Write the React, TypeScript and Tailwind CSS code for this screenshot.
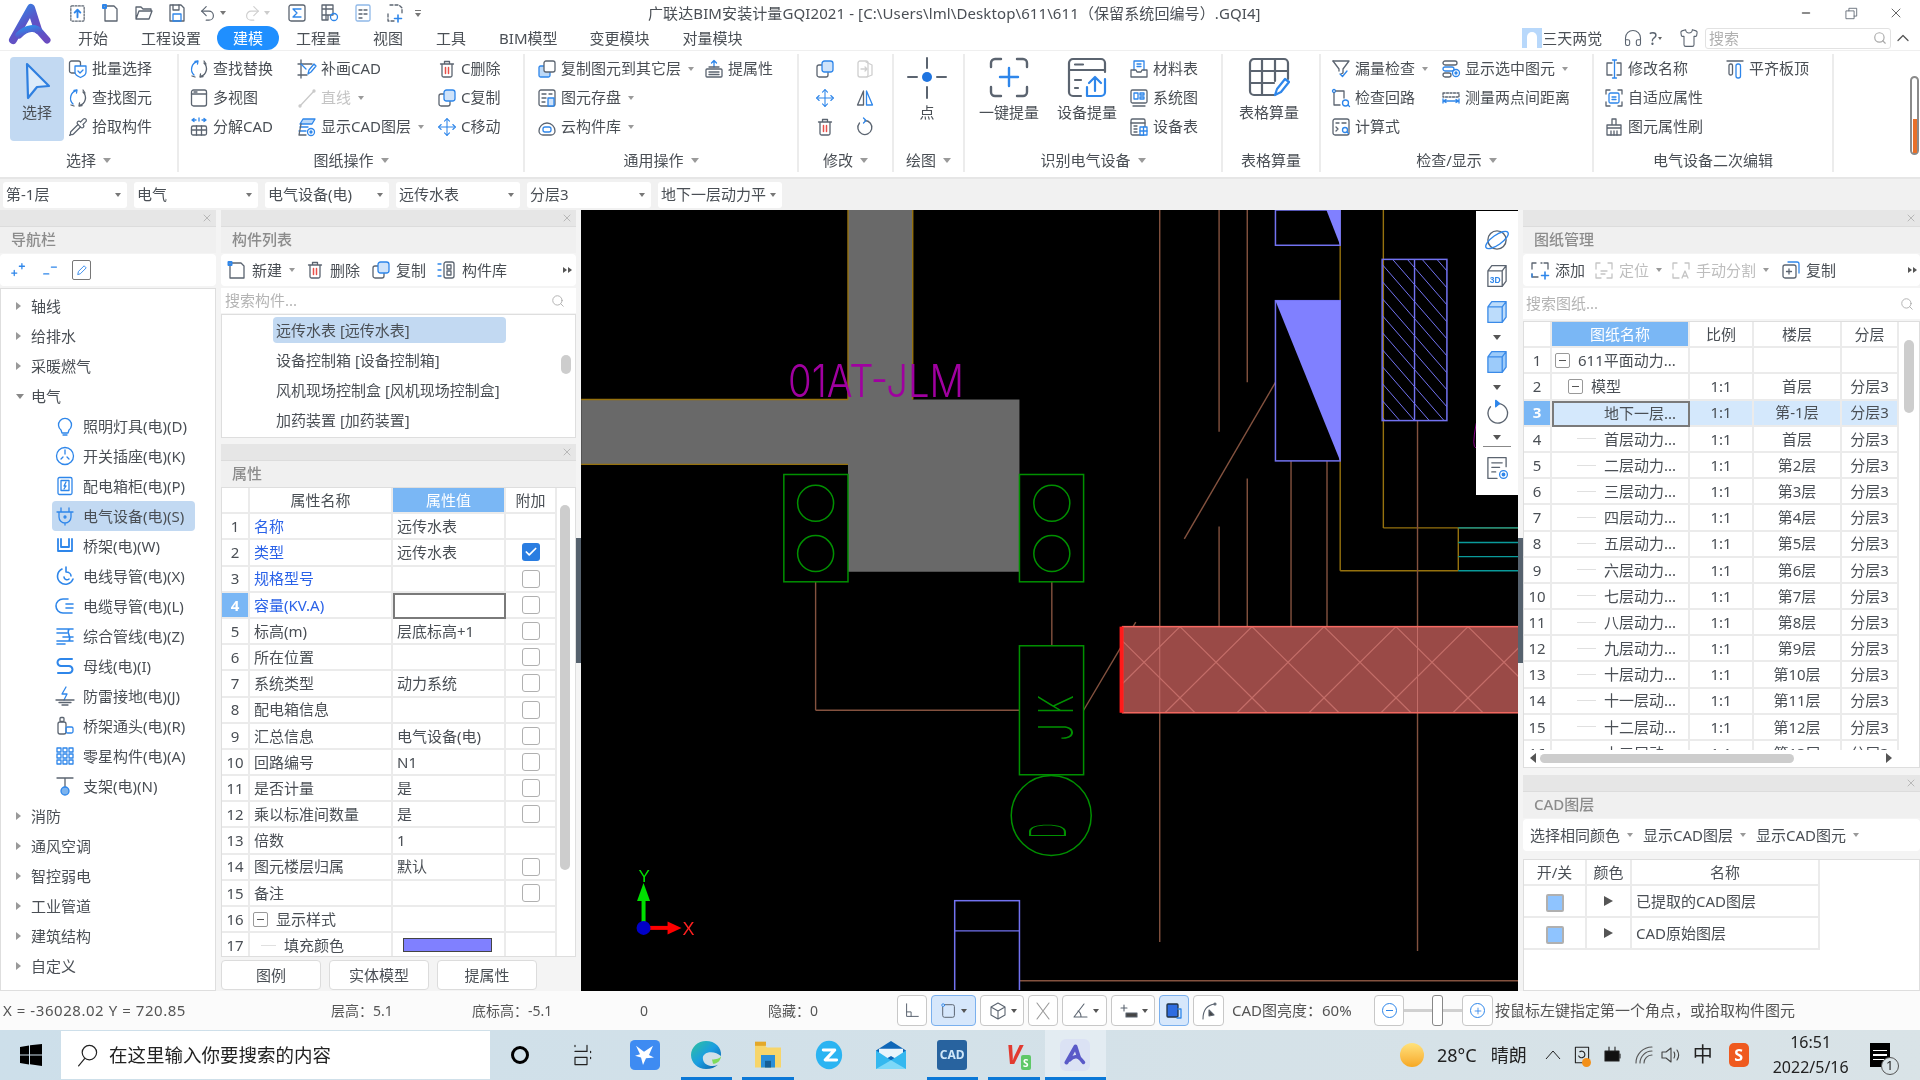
import React from "react";
import { Pipette, Move, ChevronUp, Search, Minus, X as XIcon, Check, Plus, Headphones, Shirt } from "lucide-react";

const G = "#5b6470";
const B = "#2e86ea";
const R = "#e8504a";

function Svg({ s = 20, sw = 1.3, c = G, children }: { s?: number; sw?: number; c?: string; children?: React.ReactNode }) {
  return (
    <svg width={s} height={s} viewBox="0 0 20 20" fill="none" stroke={c} strokeWidth={sw} strokeLinecap="round" strokeLinejoin="round" className="shrink-0">
      {children}
    </svg>
  );
}

const ic = {
  batch: <Svg><rect x="1.5" y="2" width="11" height="12" rx="2" /><path stroke={B} fill="#fff" d="M7 7h11v6c0 3-3 4.500-5.500 5.500C10 17.500 7 16 7 13z" /><path stroke={B} d="M10 12l2 2 3-3" /></Svg>,
  cycle: <Svg><path stroke={B} d="M8.500 2.500A8 8 0 0 0 5 16" /><path stroke={B} d="M6 2.500l3-.5-.5 3" /><path d="M11.500 17.500A8 8 0 0 0 15 4" /><path d="M14 17.500l-3 .5.500-3M3 17l3 1M15 2l2 3" /></Svg>,
  pipette: <Pipette size={20} color={G} strokeWidth={1.5} className="shrink-0" />,
  win: <Svg><rect x="2.500" y="2" width="15" height="16" rx="2" /><path d="M2.500 6h15" /><path d="M5 4h3" /></Svg>,
  explode: <Svg><path stroke={B} d="M3 3h4M5 1.500L3 3l2 1.500M17 3h-4M15 1.500L17 3l-2 1.500M10 1v3" /><rect x="2.500" y="9" width="15" height="9" rx="1.500" /><path d="M2.500 13h15M7.500 9v9M12.500 9v9" /></Svg>,
  draw: <Svg><path d="M4 1v18M1 5h14M1 16h9" /><path stroke={B} d="M11 15l1-4 5-6 2 2-5 6z" /><path stroke={B} d="M4 5l5 5" /></Svg>,
  line: <Svg c="#c9c9c9"><path d="M3 18L17 3" /><circle cx="3" cy="18" r="1" /><circle cx="17" cy="3" r="1" /></Svg>,
  layers: <Svg><path stroke={B} fill="#bcd9f8" d="M6 2h12l-3 5H3z" /><path stroke={B} d="M3 10h8M2 14h7" /><path d="M4 7L2 18h7" /><circle cx="14" cy="15" r="3.500" stroke={B} /><circle cx="14" cy="15" r="1" fill={B} stroke={B} /></Svg>,
  trash: <Svg><path d="M3.500 5h13M7.500 5V2.500h5V5M5 5v11.500a1.500 1.500 0 0 0 1.500 1.500h7a1.500 1.500 0 0 0 1.500-1.500V5" /><path stroke={R} strokeWidth="1.500" d="M8.500 8.500v6M11.500 8.500v6" /></Svg>,
  copy: <Svg><rect x="2" y="6" width="11" height="12" rx="2" /><rect x="7" y="2" width="11" height="11" rx="2.500" stroke={B} fill="#cfe3fa" /></Svg>,
  move: <Move size={20} color={B} strokeWidth={1.3} className="shrink-0" />,
  copyTo: <Svg><rect x="2" y="7" width="11" height="11" rx="1.500" stroke={B} fill="#bcd9f8" /><rect x="7" y="2" width="11" height="11" rx="2" fill="#fff" /></Svg>,
  save: <Svg><rect x="2" y="2" width="16" height="16" rx="2" /><path d="M5 6h4M12 6h3M5 10h4M5 14h3" /><rect x="11" y="10" width="6" height="8" stroke={B} fill="#cfe3fa" /></Svg>,
  cloud: <Svg><path d="M2 14a8 8 0 0 1 16 0 4 4 0 0 1-4 4H6a4 4 0 0 1-4-4z" /><rect x="6" y="10" width="8" height="5" rx="2" stroke={B} /></Svg>,
  lift: <Svg><path stroke={B} d="M10 8V1.500M7.500 4L10 1.500 12.500 4" /><path d="M5 8h10" /><rect x="2" y="10" width="16" height="8" rx="1" /><path d="M5 13h10M5 15.500h10" /></Svg>,
  clipX: <Svg c="#cfcfcf"><rect x="3" y="2" width="10" height="16" rx="2" /><path d="M11 3l6 3v10l-5 2" /><path d="M6 10h6M10 8l2 2-2 2" /></Svg>,
  mirror: <Svg><path d="M8.500 3L2.500 17h6z" /><path stroke={B} d="M11.500 3l6 14h-6z" /></Svg>,
  rotate: <Svg><path d="M10 3.500A7 7 0 1 1 4.500 6" /><path stroke={B} d="M8.500 1l2.500 2.500L8.500 6" /></Svg>,
  material: <Svg><path stroke={B} d="M5 11V2h10v9" /><path stroke={B} d="M8 5h4M8 7.500h4" /><path d="M2 11h5l1 2h4l1-2h5v7H2z" /></Svg>,
  sysmap: <Svg><rect x="2" y="2" width="16" height="13" rx="1.500" /><path stroke={B} d="M5 5h4v6H5zM11 5h4v2h-4zM11 9h4v2h-4z" /><path d="M4 18h12" /></Svg>,
  devlist: <Svg><rect x="2" y="2" width="14" height="16" rx="1.500" /><path d="M2 6h14M5 9h3M5 12h3M5 15h3" /><rect x="11" y="10" width="7" height="8" stroke={B} fill="#fff" /><path stroke={B} d="M11 14h7M14.500 10v8" /></Svg>,
  filter: <Svg><path d="M2 2h16l-6 8v4l-2 1" /><path d="M2 2l6 8v2" /><path stroke={B} d="M9 15l2.500 2.500L16 12" /></Svg>,
  listEye: <Svg><rect x="2" y="2" width="14" height="4" rx="2" /><rect x="2" y="8" width="11" height="4" rx="2" stroke={B} /><rect x="2" y="14" width="8" height="4" rx="2" /><circle cx="15" cy="14" r="3.500" stroke={B} /><circle cx="15" cy="14" r="1" fill={B} stroke={B} /></Svg>,
  loop: <Svg><circle cx="3" cy="3" r="1.500" stroke={B} /><path d="M5 3h8v7M3 5v12h6" /><circle cx="14.500" cy="15" r="3" stroke={B} /><path stroke={B} d="M17 17l1.500 1.500" /></Svg>,
  ruler: <Svg><path d="M2 5h16v4H2z" strokeDasharray="2 1.500" /><path stroke={B} d="M2 13h16M2 11v4M18 11v4M5 11.500L2.500 13 5 14.500M15 11.500l2.500 1.500-2.500 1.500" /></Svg>,
  formula: <Svg><rect x="2" y="2" width="16" height="16" rx="2" /><path d="M5 6h3M11 6h4M5 10l2 2-2 2" /><circle cx="14" cy="13" r="2.500" stroke={B} /><path stroke={B} d="M16 15l1.500 1.500" /></Svg>,
  rename: <Svg><path d="M8 4H3v12h5M13 4h4v12h-4" /><path stroke={B} d="M10.500 1v18M8.500 1h4M8.500 19h4" /></Svg>,
  align: <Svg><path d="M2 2h16" /><rect x="4" y="5" width="3.500" height="11" rx="1.500" /><rect x="11" y="5" width="4.500" height="14" rx="2" stroke={B} /></Svg>,
  fit: <Svg><path d="M2 6V2h4M14 2h4v4M2 14v4h4M14 18h4v-4" /><rect x="5" y="5" width="10" height="10" rx="1.500" stroke={B} /><path stroke={B} d="M8 9h4M8 11.500h4" /></Svg>,
  brush: <Svg><path d="M8 2h4v6H8zM3 8h14v3H3zM3 11v7h14v-7" /><path d="M7 14v4M10 14v4M13 14v4" /></Svg>,
};

function RItem({ icon, text, caret, dim }: { icon: React.ReactNode; text: string; caret?: boolean; dim?: boolean }) {
  return (
    <div className="flex h-[29px] items-center whitespace-nowrap">
      <span className="flex w-[24px] shrink-0">{icon}</span>
      <span className={dim ? "text-[#c4c4c4]" : "text-[#4a4f55]"}>{text}</span>
      {caret && <span className="ml-[7px] h-0 w-0 border-x-[3px] border-t-[4px] border-x-transparent border-t-[#9a9a9a]" />}
    </div>
  );
}

function Col({ className, children }: { className: string; children: React.ReactNode }) {
  return <div className={"flex shrink-0 flex-col " + className}>{children}</div>;
}

function Group({ className, label, caret = true, children }: { className: string; label: string; caret?: boolean; children: React.ReactNode }) {
  return (
    <div className={"flex h-[118px] shrink-0 flex-col border-r-2 border-[#ececec] " + className}>
      <div className="flex h-[95px]">{children}</div>
      <div className="flex h-[22px] items-center justify-center text-[#4a4f55]">
        {label}
        {caret && <span className="ml-[7px] h-0 w-0 border-x-[4px] border-t-[5px] border-x-transparent border-t-[#9a9a9a]" />}
      </div>
    </div>
  );
}

function Big({ icon, text, className }: { icon: React.ReactNode; text: string; className: string }) {
  return (
    <div className={"flex flex-col items-center " + className}>
      <div className="flex h-[47px] w-full items-start justify-center pt-[3px]">{icon}</div>
      <div className="text-[#4a4f55]">{text}</div>
    </div>
  );
}

function Logo() {
  return (
    <svg width="44" height="46" viewBox="0 0 44 46">
      <defs>
        <linearGradient id="lg" x1="0" y1="0" x2="0.6" y2="1">
          <stop offset="0" stopColor="#2f8ae8" />
          <stop offset="0.6" stopColor="#5a55c8" />
          <stop offset="1" stopColor="#6a4cc0" />
        </linearGradient>
      </defs>
      <path d="M5 38L23 6l7 22" fill="none" stroke="url(#lg)" strokeWidth="8" strokeLinecap="round" strokeLinejoin="round" />
      <path d="M11 33c8-8 17-8 21-3l7 8" fill="none" stroke="url(#lg)" strokeWidth="7" strokeLinecap="round" />
    </svg>
  );
}

function Header() {
  const quick = [
    <Svg s={19}><rect x="3" y="2" width="14" height="16" rx="1" strokeDasharray="2 1.500" /><path stroke={B} strokeWidth="2" d="M10 14V7M7 9l3-3 3 3" /></Svg>,
    <Svg s={20}><path d="M4 3v15h12V6l-3-3H6" /><path stroke={B} strokeWidth="2" d="M2 2h3v3H2z" /></Svg>,
    <Svg s={20}><path d="M2 16V4h5l2 2h8v2M2 16l3-8h13l-3 8z" /></Svg>,
    <Svg s={20}><path d="M3 2h11l3 3v13H3z" /><path d="M6 2v5h6V2" /><rect x="6" y="11" width="8" height="7" stroke={B} /></Svg>,
  ];
  return (
    <div className="flex h-[50px] shrink-0 bg-white">
      <div className="flex w-[66px] shrink-0 items-start pl-[8px] pt-[2px]"><Logo /></div>
      <div className="flex min-w-0 flex-1 flex-col">
        <div className="flex h-[26px] items-center text-[#4a4f55]">
          <div className="flex w-[582px] shrink-0 items-center">
            <span className="ml-[2px] w-[33px]">{quick[0]}</span>
            <span className="w-[33px]">{quick[1]}</span>
            <span className="w-[33px]">{quick[2]}</span>
            <span className="w-[32px]">{quick[3]}</span>
            <span className="flex w-[44px] items-center"><Svg s={18}><path d="M8 3L3 8l5 5" /><path d="M3 8h8a5 5 0 0 1 0 10H8" /></Svg><span className="ml-[3px] h-0 w-0 border-x-[3px] border-t-[4px] border-x-transparent border-t-[#777]" /></span>
            <span className="flex w-[44px] items-center"><Svg s={18} c="#cfcfcf"><path d="M12 3l5 5-5 5" /><path d="M17 8H9a5 5 0 0 0 0 10h3" /></Svg><span className="ml-[3px] h-0 w-0 border-x-[3px] border-t-[4px] border-x-transparent border-t-[#ccc]" /></span>
            <span className="w-[33px]"><Svg><rect x="2" y="2" width="16" height="16" rx="2" /><path stroke={B} d="M14 6H6l4 4-4 4h8" /></Svg></span>
            <span className="w-[33px]"><Svg><path d="M2 2h11v4H2zM2 6h11v6H2zM2 12h6v5H2zM6 2v15" /><circle cx="14" cy="14" r="3.500" stroke={B} /></Svg></span>
            <span className="w-[32px]"><Svg><rect x="3" y="2" width="14" height="16" rx="1.500" stroke="#8fb8e8" /><path d="M6 7h3M11 7h3M6 11h3M11 11h3M6 15h3" /></Svg></span>
            <span className="w-[30px]"><Svg><path d="M5 2h9l3 3v5M3 11v7h7" strokeDasharray="3 2" /><path stroke={B} strokeWidth="1.600" d="M13 12v7M9.500 15.500h7" /></Svg></span>
            <span className="flex flex-col items-center gap-[2px]"><span className="h-[1px] w-[6px] bg-[#777]" /><span className="h-0 w-0 border-x-[3px] border-t-[4px] border-x-transparent border-t-[#777]" /></span>
          </div>
          <span className="text-[15px] tracking-[0.1px]">广联达BIM安装计量GQI2021 - [C:\Users\lml\Desktop\611\611（保留系统回编号）.GQI4]</span>
          <div className="ml-auto flex items-center">
            <Minus size={12} color="#666" strokeWidth={3} />
            <span className="ml-[33px] flex"><Svg s={13}><path d="M6 6V2h12v12h-4M2 6h12v12H2z" /></Svg></span>
            <XIcon size={16} color="#666" strokeWidth={1.5} className="ml-[30px] mr-[16px]" />
          </div>
        </div>
        <div className="flex h-[24px] items-center text-[15px] text-[#4a4f55]">
          <span className="ml-[12px]">开始</span>
          <span className="ml-[33px]">工程设置</span>
          <span className="ml-[16px] flex h-[24px] w-[62px] items-center justify-center rounded-full bg-[#1f8fff] text-white">建模</span>
          <span className="ml-[17px]">工程量</span>
          <span className="ml-[32px]">视图</span>
          <span className="ml-[33px]">工具</span>
          <span className="ml-[33px]">BIM模型</span>
          <span className="ml-[32px]">变更模块</span>
          <span className="ml-[33px]">对量模块</span>
          <div className="ml-auto flex items-center">
            <span className="flex h-[20px] w-[20px] items-end justify-center bg-[#b8d8fb]"><span className="h-[16px] w-[10px] rounded-t-full bg-white" /></span>
            <span>三天两觉</span>
            <Headphones size={20} color={G} strokeWidth={1.3} className="ml-[21px]" />
            <span className="ml-[6px] text-[18px] leading-none text-[#5b6470]">?</span>
            <span className="ml-[1px] h-0 w-0 border-x-[2px] border-t-[3px] border-x-transparent border-t-[#666]" />
            <Shirt size={20} color={G} strokeWidth={1.3} className="ml-[17px]" />
            <div className="ml-[6px] flex h-[21px] w-[186px] items-center justify-between rounded-[3px] border border-[#e2e2e2] px-[3px] text-[#b0b0b0]">
              <span>搜索</span>
              <Search size={14} color="#aaa" />
            </div>
            <ChevronUp size={20} color="#555" strokeWidth={1.5} className="ml-[2px] mr-[7px]" />
          </div>
        </div>
      </div>
    </div>
  );
}

function Ribbon() {
  return (
    <div className="flex h-[127px] shrink-0 border-t border-[#efefef] bg-white pt-[3px] text-[15px]">
      <Group className="w-[179px]" label="选择">
        <div className="ml-[10px] mt-[3px] flex h-[84px] w-[54px] flex-col items-center rounded-[4px] bg-[#c2d9f2]">
          <svg width="34" height="40" viewBox="0 0 34 40" className="mt-[3px]"><path d="M7 4l22 22-12 1-9 11z" fill="#dcebfa" stroke="#2e7fe0" strokeWidth="2.200" strokeLinejoin="round" /></svg>
          <span className="mt-[1px] text-[#4a4f55]">选择</span>
        </div>
        <Col className="ml-[4px]">
          <RItem icon={ic.batch} text="批量选择" />
          <RItem icon={ic.cycle} text="查找图元" />
          <RItem icon={ic.pipette} text="拾取构件" />
        </Col>
      </Group>
      <Group className="w-[346px]" label="图纸操作">
        <Col className="ml-[10px] w-[108px]">
          <RItem icon={ic.cycle} text="查找替换" />
          <RItem icon={ic.win} text="多视图" />
          <RItem icon={ic.explode} text="分解CAD" />
        </Col>
        <Col className="w-[140px]">
          <RItem icon={ic.draw} text="补画CAD" />
          <RItem icon={ic.line} text="直线" dim caret />
          <RItem icon={ic.layers} text="显示CAD图层" caret />
        </Col>
        <Col>
          <RItem icon={ic.trash} text="C删除" />
          <RItem icon={ic.copy} text="C复制" />
          <RItem icon={ic.move} text="C移动" />
        </Col>
      </Group>
      <Group className="w-[274px]" label="通用操作">
        <Col className="ml-[12px] w-[167px]">
          <RItem icon={ic.copyTo} text="复制图元到其它层" caret />
          <RItem icon={ic.save} text="图元存盘" caret />
          <RItem icon={ic.cloud} text="云构件库" caret />
        </Col>
        <Col><RItem icon={ic.lift} text="提属性" /></Col>
      </Group>
      <Group className="w-[95px]" label="修改">
        <Col className="ml-[16px] w-[40px]">
          <RItem icon={ic.copy} text="" />
          <RItem icon={ic.move} text="" />
          <RItem icon={ic.trash} text="" />
        </Col>
        <Col>
          <RItem icon={ic.clipX} text="" />
          <RItem icon={ic.mirror} text="" />
          <RItem icon={ic.rotate} text="" />
        </Col>
      </Group>
      <Group className="w-[71px]" label="绘图">
        <Big className="w-[66px]" text="点" icon={
          <svg width="40" height="42" viewBox="0 0 40 42" fill="none" stroke={G} strokeWidth="2" strokeLinecap="round"><path d="M20 1v10M20 30v11M1 20h9M30 20h9" /><circle cx="20" cy="20" r="5" fill="#1f74e0" stroke="none" /></svg>
        } />
      </Group>
      <Group className="w-[258px]" label="识别电气设备">
        <Big className="ml-[8px] w-[72px]" text="一键提量" icon={
          <svg width="40" height="42" viewBox="0 0 40 42" fill="none" stroke={G} strokeWidth="2.400" strokeLinecap="round" strokeLinejoin="round"><path d="M2 10V6a4 4 0 0 1 4-4h6M28 2h6a4 4 0 0 1 4 4v4M2 30v5a4 4 0 0 0 4 4h6M28 39h6a4 4 0 0 0 4-4v-5" /><path stroke="#2e86ea" d="M20 11v18M11 20h18" /></svg>
        } />
        <Big className="ml-[2px] w-[80px]" text="设备提量" icon={
          <svg width="40" height="42" viewBox="0 0 40 42" fill="none" stroke={G} strokeWidth="2.200" strokeLinecap="round" strokeLinejoin="round"><path d="M14 39H6a4 4 0 0 1-4-4V6a4 4 0 0 1 4-4h28a4 4 0 0 1 4 4v9M2 13h36M8 7.500h8M8 23h6M8 31h3" /><path stroke="#2e86ea" d="M38 22v13a4 4 0 0 1-4 4H20v-9M28 34V20M22 26l6-6 6 6" /></svg>
        } />
        <Col className="ml-[2px]">
          <RItem icon={ic.material} text="材料表" />
          <RItem icon={ic.sysmap} text="系统图" />
          <RItem icon={ic.devlist} text="设备表" />
        </Col>
      </Group>
      <Group className="w-[98px]" label="表格算量" caret={false}>
        <Big className="ml-[6px] w-[80px]" text="表格算量" icon={
          <svg width="42" height="42" viewBox="0 0 42 42" fill="none" stroke={G} strokeWidth="2.200" strokeLinecap="round" strokeLinejoin="round"><path d="M26 38H6a4 4 0 0 1-4-4V6a4 4 0 0 1 4-4h30a4 4 0 0 1 4 4v16M2 14h38M2 26h24M14 2v36M27 2v22" /><path stroke="#2e86ea" d="M27 38l2-6 8-10 4 3-8 10z" /></svg>
        } />
      </Group>
      <Group className="w-[273px]" label="检查/显示">
        <Col className="ml-[10px] w-[110px]">
          <RItem icon={ic.filter} text="漏量检查" caret />
          <RItem icon={ic.loop} text="检查回路" />
          <RItem icon={ic.formula} text="计算式" />
        </Col>
        <Col>
          <RItem icon={ic.listEye} text="显示选中图元" caret />
          <RItem icon={ic.ruler} text="测量两点间距离" />
        </Col>
      </Group>
      <Group className="w-[240px]" label="电气设备二次编辑" caret={false}>
        <Col className="ml-[10px] w-[121px]">
          <RItem icon={ic.rename} text="修改名称" />
          <RItem icon={ic.fit} text="自适应属性" />
          <RItem icon={ic.brush} text="图元属性刷" />
        </Col>
        <Col><RItem icon={ic.align} text="平齐板顶" /></Col>
      </Group>
      <div className="ml-[76px] mt-[22px] flex h-[79px] w-[9px] flex-col justify-end rounded-full border-2 border-[#8a8a8a] bg-white">
        <div className="mx-auto h-[34px] w-[4px] bg-[#e8702a]" />
      </div>
    </div>
  );
}

function Sel({ text, w = "w-[124px]" }: { text: string; w?: string }) {
  return (
    <div className={"flex h-[26px] items-center justify-between rounded-[3px] bg-white pl-[3px] pr-[6px] text-[15px] text-[#4a4f55] " + w}>
      <span className="whitespace-nowrap">{text}</span>
      <span className="h-0 w-0 border-x-[3px] border-t-[4px] border-x-transparent border-t-[#777]" />
    </div>
  );
}

function SelBar() {
  return (
    <div className="flex h-[33px] shrink-0 items-center gap-[7px] border-t-2 border-[#e6e6e6] bg-[#f1f1f1] pl-[3px]">
      <Sel text="第-1层" />
      <Sel text="电气" />
      <Sel text="电气设备(电)" />
      <Sel text="远传水表" />
      <Sel text="分层3" />
      <Sel text="地下一层动力平" />
    </div>
  );
}

function PanelHead({ title }: { title: string }) {
  return (
    <>
      <div className="flex h-[16px] shrink-0 items-center justify-end bg-[#e6e6e6] pr-[3px]">
        <XIcon size={12} color="#a8a8a8" strokeWidth={1.500} />
      </div>
      <div className="flex h-[27px] shrink-0 items-center border-t border-[#dcdcdc] bg-[#f0f0f0] pb-[2px] pl-[11px] text-[15px] font-medium text-[#8c8c8c]">{title}</div>
    </>
  );
}

const T = "#2e86ea";
const treeIcons: React.ReactNode[] = [
  <Svg c={T} s={20}><path d="M6 14a6.500 6.500 0 1 1 8 0l-1 3H7z" /><path d="M8 19h4" /></Svg>,
  <Svg c={T} s={20}><circle cx="10" cy="10" r="8.500" /><path d="M10 4v4M6 13l2-2M14 13l-2-2" /></Svg>,
  <Svg c={T} s={20}><rect x="3" y="1.500" width="14" height="17" rx="1.500" /><rect x="6" y="4.500" width="8" height="10" /><path d="M11 6l-2 4h2l-2 3" /></Svg>,
  <Svg c={T} s={20}><path d="M2 6h16M6 2v4M14 2v4M4 6v5a6 6 0 0 0 12 0V6M10 17v2" /><circle cx="10" cy="11" r="1" /></Svg>,
  <Svg c={T} s={20} sw={1.800}><path d="M3 3v12h14V3M6 3v8h8V3" /></Svg>,
  <Svg c={T} s={20} sw={1.600}><path d="M7 3a8 8 0 1 0 11 10" /><path d="M11 1v5c3 0 5 2 5 4M9 11a3 3 0 0 0 5 2" /></Svg>,
  <Svg c={T} s={20} sw={1.600}><path d="M13 3H8a7 7 0 1 0 0 14h9M11 8h7M11 12h7" /></Svg>,
  <Svg c={T} s={20} sw={1.600}><path d="M2 3h16M2 7h10M8 11h10M2 15h16M2 18h8M14 3c-3 4 3 8 0 12" /></Svg>,
  <Svg c={T} s={20} sw={2}><path d="M17 3H6a3 3 0 0 0 0 7h8a3 3 0 0 1 0 7H3" /></Svg>,
  <Svg c={T} s={20}><path d="M11 1l-4 7h5l-3 6" /><path d="M1 14h18M4 16.500h12M7 19h6" stroke={G} /></Svg>,
  <Svg c={T} s={20}><rect x="3" y="6" width="8" height="12" rx="2" stroke={G} /><rect x="5" y="1.500" width="4" height="4" rx="1" stroke={G} /><rect x="11" y="11" width="7" height="6" rx="1.500" /></Svg>,
  <Svg c={T} s={20}><path d="M2 2h4v4H2zM8 2h4v4H8zM14 2h4v4h-4zM2 8h4v4H2zM8 8h4v4H8zM14 8h4v4h-4zM2 14h4v4H2zM8 14h4v4H8zM14 14h4v4h-4z" /></Svg>,
  <Svg c={G} s={20}><path d="M2 2h16M10 2v9" /><circle cx="10" cy="15" r="4" fill="#7cb3ee" stroke={T} /></Svg>,
];
const treeKids = ["照明灯具(电)(D)", "开关插座(电)(K)", "配电箱柜(电)(P)", "电气设备(电)(S)", "桥架(电)(W)", "电线导管(电)(X)", "电缆导管(电)(L)", "综合管线(电)(Z)", "母线(电)(I)", "防雷接地(电)(J)", "桥架通头(电)(R)", "零星构件(电)(A)", "支架(电)(N)"];

function Top({ text, open }: { text: string; open?: boolean }) {
  return (
    <div className="flex h-[30px] items-center">
      <span className="ml-[15px] flex w-[15px]">
        {open
          ? <span className="h-0 w-0 border-x-[4px] border-t-[5px] border-x-transparent border-t-[#888]" />
          : <span className="h-0 w-0 border-y-[4px] border-l-[5px] border-y-transparent border-l-[#999]" />}
      </span>
      <span>{text}</span>
    </div>
  );
}

function Nav() {
  return (
    <div className="flex w-[216px] shrink-0 flex-col">
      <PanelHead title="导航栏" />
      <div className="mt-[1px] flex h-[32px] shrink-0 items-center rounded-[4px] bg-white pl-[10px]">
        <Svg s={17} c={B} sw={1.500}><path d="M2 13h6M5 10v6M11 5h6M14 2v6" /></Svg>
        <span className="ml-[15px]"><Svg s={17} c={B} sw={1.500}><path d="M2 14h6M11 6h6" /></Svg></span>
        <span className="ml-[13px] flex h-[20px] w-[19px] items-center justify-center rounded-[2px] border border-[#777]"><Svg s={14} c={B}><path d="M4 16l1-4 8-8 3 3-8 8z" /></Svg></span>
      </div>
      <div className="mt-[2px] flex-1 border border-[#dedede] bg-white pt-[2px] text-[15px] text-[#4a4f55]">
        <Top text="轴线" />
        <Top text="给排水" />
        <Top text="采暖燃气" />
        <Top text="电气" open />
        {treeKids.map((t, i) => (
          <div key={t} className={"ml-[51px] flex h-[30px] w-[143px] items-center pl-[3px] " + (i === 3 ? "rounded-[4px] bg-[#c2d9f2]" : "")}>
            <span className="flex w-[28px]">{treeIcons[i]}</span>
            <span className="whitespace-nowrap">{t}</span>
          </div>
        ))}
        <Top text="消防" />
        <Top text="通风空调" />
        <Top text="智控弱电" />
        <Top text="工业管道" />
        <Top text="建筑结构" />
        <Top text="自定义" />
      </div>
    </div>
  );
}

function TB({ icon, text, caret, dim }: { icon?: React.ReactNode; text: string; caret?: boolean; dim?: boolean }) {
  return (
    <div className="flex items-center whitespace-nowrap">
      {icon && <span className="mr-[5px] flex">{icon}</span>}
      <span className={dim ? "text-[#bdbdbd]" : "text-[#4a4f55]"}>{text}</span>
      {caret && <span className="ml-[7px] h-0 w-0 border-x-[3px] border-t-[4px] border-x-transparent border-t-[#999]" />}
    </div>
  );
}

function More() {
  return (
    <span className="flex h-[26px] w-[12px] items-center justify-center rounded-[3px] bg-white">
      <span className="h-0 w-0 border-y-[3px] border-l-[4px] border-y-transparent border-l-[#555]" />
      <span className="ml-[1px] h-0 w-0 border-y-[3px] border-l-[4px] border-y-transparent border-l-[#555]" />
    </span>
  );
}

function ComponentList() {
  return (
    <div className="flex h-[228px] shrink-0 flex-col">
      <PanelHead title="构件列表" />
      <div className="mt-[1px] flex h-[32px] shrink-0 items-center gap-[10px] rounded-[4px] bg-white pl-[6px] text-[15px]">
        <TB icon={<Svg s={20}><path d="M3 3v15h14V6l-3-3H5" /><path stroke={B} strokeWidth="2" d="M1.500 2h3v3h-3z" /></Svg>} text="新建" caret />
        <TB icon={ic.trash} text="删除" />
        <span className="ml-[1px]"><TB icon={ic.copy} text="复制" /></span>
        <span className="ml-[1px]"><TB icon={<Svg s={20}><path stroke={B} d="M1 4h3M1 10h3M1 16h3" /><rect x="7" y="2" width="10" height="16" rx="2" /><rect x="10" y="5" width="4" height="4" /><rect x="10" y="11" width="4" height="4" /></Svg>} text="构件库" /></span>
        <span className="ml-auto mr-[3px]"><More /></span>
      </div>
      <div className="mt-[2px] flex h-[25px] shrink-0 items-center justify-between bg-white pl-[4px] pr-[11px] text-[15px] text-[#b4b4b4]">
        <span>搜索构件...</span>
        <Search size={14} color="#aaa" strokeWidth={1.500} />
      </div>
      <div className="relative mt-[1px] flex-1 border border-[#dedede] bg-white text-[15px] text-[#4a4f55]">
        <div className="ml-[51px] mt-[2px] flex h-[26px] w-[233px] items-center rounded-[4px] bg-[#c2d9f2] pl-[3px]">远传水表 [远传水表]</div>
        <div className="ml-[54px] flex h-[30px] items-center whitespace-nowrap pt-[4px]">设备控制箱 [设备控制箱]</div>
        <div className="ml-[54px] mt-[2px] flex h-[30px] items-center whitespace-nowrap">风机现场控制盒 [风机现场控制盒]</div>
        <div className="ml-[54px] flex h-[30px] items-center whitespace-nowrap">加药装置 [加药装置]</div>
        <div className="absolute right-[4px] top-[40px] h-[19px] w-[10px] rounded-full bg-[#cdcdcd]" />
      </div>
    </div>
  );
}

function Cb({ checked }: { checked?: boolean }) {
  if (checked)
    return <span className="flex h-[18px] w-[18px] items-center justify-center rounded-[3px] bg-[#2a7de1]"><Check size={14} color="#fff" strokeWidth={3} /></span>;
  return <span className="h-[18px] w-[18px] rounded-[3px] border-[1.500px] border-[#b0b0b0] bg-white" />;
}

const props: [string, string, number][] = [
  ["名称", "远传水表", 0],
  ["类型", "远传水表", 2],
  ["规格型号", "", 1],
  ["容量(KV.A)", "", 1],
  ["标高(m)", "层底标高+1", 1],
  ["所在位置", "", 1],
  ["系统类型", "动力系统", 1],
  ["配电箱信息", "", 1],
  ["汇总信息", "电气设备(电)", 1],
  ["回路编号", "N1", 1],
  ["是否计量", "是", 1],
  ["乘以标准间数量", "是", 1],
  ["倍数", "1", 0],
  ["图元楼层归属", "默认", 1],
  ["备注", "", 1],
];

const cell = "flex h-[26.200px] items-center border-b-2 border-r-2 border-[#ebebeb]";
const selCell = "flex h-[26.200px] items-center border-2 border-[#7a7a7a]";

function Props() {
  return (
    <div className="mt-[6px] flex flex-1 flex-col">
      <PanelHead title="属性" />
      <div className="relative h-[470px] overflow-hidden border border-[#dedede] bg-white text-[15px] text-[#4a4f55]">
        <div className="grid w-[335px] grid-cols-[28px_143px_113px_51px]">
          <div className={cell} />
          <div className={cell + " justify-center"}>属性名称</div>
          <div className={cell + " justify-center bg-[#7ab7f5] text-white"}>属性值</div>
          <div className={cell + " justify-center"}>附加</div>
          {props.map(([n, v, c], i) => (
            <React.Fragment key={n}>
              <div className={cell + " justify-center " + (i === 3 ? "bg-[#7ab7f5] font-bold text-white" : "")}>{i + 1}</div>
              <div className={cell + " pl-[4px] whitespace-nowrap " + (i < 4 ? "text-[#2a62e8]" : "")}>{n}</div>
              <div className={(i === 3 ? selCell : cell) + " pl-[4px] whitespace-nowrap"}>{v}</div>
              <div className={cell + " justify-center"}>{c > 0 && <Cb checked={c === 2} />}</div>
            </React.Fragment>
          ))}
          <div className={cell + " justify-center"}>16</div>
          <div className={cell + " pl-[3px]"}>
            <span className="mr-[8px] flex h-[15px] w-[15px] items-center justify-center rounded-[2px] border border-[#999]"><span className="h-[1px] w-[7px] bg-[#555]" /></span>
            显示样式
          </div>
          <div className={cell} />
          <div className={cell} />
          <div className={cell + " justify-center"}>17</div>
          <div className={cell + " pl-[11px]"}>
            <span className="mr-[8px] h-[1px] w-[15px] bg-[#e0e0e0]" />
            填充颜色
          </div>
          <div className={cell + " pl-[10px]"}><span className="h-[14px] w-[89px] border border-[#444] bg-[#8080ff]" /></div>
          <div className={cell} />
        </div>
        <div className="absolute right-[5px] top-[17px] h-[365px] w-[10px] rounded-full bg-[#cdcdcd]" />
      </div>
      <div className="mt-[3px] flex gap-[8px] text-[15px] text-[#4a4f55]">
        {["图例", "实体模型", "提属性"].map((t) => (
          <div key={t} className="flex h-[30px] w-[100px] items-center justify-center rounded-[4px] border border-[#dcdcdc] bg-white">{t}</div>
        ))}
      </div>
    </div>
  );
}

const zx = (v: number) => v / 1.668 - 1;
const zy = (v: number) => v / 1.985 - 1;

const brown: number[][] = [
  [393, 740, 393, 995], [393, 995, 733, 995], [787, 740, 787, 867], [840, 995, 927, 820],
  [967, 2, 967, 1455], [1066, 2, 1066, 442], [1066, 630, 1066, 830], [1113, 2, 1113, 344], [1113, 535, 1113, 830],
  [1186, 500, 1186, 830], [1246, 500, 1246, 830], [1397, 420, 1397, 1473], [1160, 344, 1008, 655], [733, 1532, 1566, 1532],
];
const gold: number[][] = [
  [447, 2, 447, 378], [555, 2, 555, 378], [2, 378, 447, 378], [2, 507, 447, 507],
  [1268, 2, 1268, 718], [1268, 718, 1465, 718], [1465, 718, 1465, 633], [1340, 2, 1340, 633], [1340, 633, 1566, 633],
];
const teal: number[][] = [[1465, 633, 1566, 633], [1465, 662, 1566, 662], [1465, 690, 1566, 690], [1465, 718, 1566, 718]];
const violet = "#7272f0";
const green = "#009000";

function Ln({ d, c, w = 1.400 }: { d: number[]; c: string; w?: number }) {
  return <line x1={zx(d[0])} y1={zy(d[1])} x2={zx(d[2])} y2={zy(d[3])} stroke={c} strokeWidth={w} />;
}

function Rc({ a, b, cc, d, c }: { a: number; b: number; cc: number; d: number; c: string }) {
  return <rect x={zx(a)} y={zy(b)} width={(cc - a) / 1.668} height={(d - b) / 1.985} fill="none" stroke={c} strokeWidth={1.500} />;
}

function CanvasDrawing() {
  const px = (pts: number[][]) => pts.map(([a, b]) => `${zx(a)},${zy(b)}`).join(" ");
  const rx0 = zx(905), ry0 = zy(829), ry1 = zy(1000);
  const k = [-3, -2, -1, 0, 1, 2, 3, 4, 5, 6];
  const hx0 = zx(1338), hy0 = zy(100), hw = 108 / 1.668, hh = 320 / 1.985;
  const thin = "Inter,'Liberation Sans',sans-serif";
  return (
    <svg width="937" height="780" viewBox="0 0 937 780" className="absolute left-0 top-0">
      <defs>
        <clipPath id="redclip"><rect x={rx0} y={ry0} width={937 - rx0} height={ry1 - ry0} /></clipPath>
        <clipPath id="hatchclip"><rect x={hx0} y={hy0} width={hw} height={hh} /></clipPath>
      </defs>
      <polygon points={px([[447, 2], [555, 2], [555, 378], [733, 378], [733, 720], [447, 720], [447, 507], [2, 507], [2, 378], [447, 378]])} fill="#696969" />
      {gold.map((d, i) => <Ln key={i} d={d} c="#96720e" />)}
      {teal.map((d, i) => <Ln key={i} d={d} c="#0a9a9a" />)}
      {brown.map((d, i) => <Ln key={i} d={d} c="#84523f" />)}
      <text x={zx(347)} y={zy(373)} fontSize="45" fill="#a000a0" fontWeight="300" fontFamily={thin} textLength="176" lengthAdjust="spacingAndGlyphs">01AT-JLM</text>
      <Rc a={340} b={527} cc={447} d={740} c={green} />
      <Rc a={733} b={527} cc={840} d={740} c={green} />
      {[393, 787].map((x) => [584, 684].map((y) => <circle key={x + "-" + y} cx={zx(x)} cy={zy(y)} r="18" fill="none" stroke={green} strokeWidth="1.500" />))}
      <Rc a={733} b={867} cc={840} d={1123} c={green} />
      <text transform={`translate(${zx(822)},${zy(1056)}) rotate(-90)`} fontSize="48" fill={green} fontWeight="200" fontFamily={thin} textLength="46" lengthAdjust="spacingAndGlyphs">J K</text>
      <circle cx={zx(786)} cy={zy(1204)} r="40" fill="none" stroke={green} strokeWidth="1.500" />
      <text transform={`translate(${zx(810)},${zy(1249)}) rotate(-90)`} fontSize="50" fill={green} fontWeight="200" fontFamily={thin} textLength="15" lengthAdjust="spacingAndGlyphs">D</text>
      <rect x={rx0} y={ry0} width={937 - rx0} height={ry1 - ry0} fill="#9a4a47" />
      <g clipPath="url(#redclip)" stroke="#c46e69" strokeWidth="1.200">
        {k.map((i) => <line key={"a" + i} x1={599 + 72 * i} y1={ry0} x2={599 + 72 * i + 87} y2={ry1} />)}
        {k.map((i) => <line key={"b" + i} x1={599 + 72 * i} y1={ry0} x2={599 + 72 * i - 87} y2={ry1} />)}
      </g>
      <line x1={zx(967)} y1={ry0} x2={zx(967)} y2={ry1} stroke="#c46e69" />
      <line x1={zx(1397)} y1={ry0} x2={zx(1397)} y2={ry1} stroke="#c46e69" />
      <rect x={rx0} y={ry0} width={937 - rx0 + 4} height={ry1 - ry0} fill="none" stroke="#f56a62" strokeWidth="1.500" />
      <rect x={zx(900)} y={ry0} width="4" height={ry1 - ry0} fill="#ff1a1a" />
      <Rc a={1160} b={2} cc={1268} d={72} c={violet} />
      <polygon points={px([[1245, 2], [1268, 2], [1268, 72]])} fill="#8080ff" />
      <Rc a={1160} b={182} cc={1268} d={500} c={violet} />
      <polygon points={px([[1160, 182], [1268, 182], [1268, 500]])} fill="#8080ff" />
      <g clipPath="url(#hatchclip)" stroke={violet} strokeWidth="1">
        {Array.from({ length: 16 }, (_, i) => <line key={i} x1={hx0} y1={hy0 - 80 + i * 17} x2={hx0 + hw} y2={hy0 - 80 + i * 17 + hw * 1.15} />)}
      </g>
      <Rc a={1338} b={100} cc={1446} d={420} c={violet} />
      <Ln d={[1392, 100, 1392, 420]} c={violet} />
      <Rc a={625} b={1373} cc={733} d={1560} c={violet} />
      <Ln d={[625, 1433, 733, 1433]} c={violet} />
      <path d={`M${zx(1495)} ${zy(425)} q-5 25 0 25`} fill="none" stroke="#8a008a" />
      <g transform={`translate(${zx(106)},${zy(1427)})`}>
        <line x1="0" y1="0" x2="0" y2="-30" stroke="#00e000" strokeWidth="4" />
        <polygon points="-6.500,-27 6.500,-27 0,-45" fill="#00e000" />
        <line x1="0" y1="0" x2="26" y2="0" stroke="#ff0000" strokeWidth="4" />
        <polygon points="24,-6.500 24,6.500 38,0" fill="#ff0000" />
        <circle r="7" fill="#0000c8" />
        <text x="-5" y="-46" fontSize="17" fill="#00e000" fontFamily="'Liberation Sans',sans-serif">Y</text>
        <text x="39" y="7" fontSize="18" fill="#ff2020" fontFamily="'Liberation Sans',sans-serif">X</text>
      </g>
    </svg>
  );
}

function CanvasTools() {
  const cube = (fill: string) => (
    <Svg s={26} sw={1}><path fill={fill} stroke={fill === "#fff" ? G : "#3a8ae8"} d="M3 6h11v12H3zM3 6l3-4h11v12l-3 4M14 6l3-4" /></Svg>
  );
  const tri = <span className="mb-[9px] mt-[10px] h-0 w-0 shrink-0 border-x-[4px] border-t-[5px] border-x-transparent border-t-[#555]" />;
  return (
    <div className="absolute right-0 top-[1px] flex h-[284px] w-[42px] flex-col items-center bg-white pt-[15px]">
      <Svg s={28} sw={1}><circle cx="10" cy="10" r="6.500" /><ellipse cx="10" cy="10" rx="9.500" ry="3.500" transform="rotate(-35 10 10)" stroke={B} /></Svg>
      <span className="mt-[9px] flex"><Svg s={26} sw={1}><path d="M3 6h11v12H3zM3 6l3-4h11v12l-3 4M14 6l3-4" /><text x="4.500" y="15" fontSize="6.500" fill={B} stroke="none" fontWeight="700" fontFamily="'Liberation Sans',sans-serif">3D</text></Svg></span>
      <span className="mt-[10px] flex">{cube("#bcdcfb")}</span>
      {tri}
      <span className="flex">{cube("#9ccbfa")}</span>
      {tri}
      <span className="flex"><Svg s={26} sw={1}><path d="M11 3.500a7.500 7.500 0 1 1-6 2.500" /><path stroke={B} fill={B} d="M9 1l3 2.500L9 6z" /></Svg></span>
      {tri}
      <span className="-mt-[3px] h-[1px] w-[28px] shrink-0 bg-[#888]" />
      <span className="mt-[8px] flex"><Svg s={26} sw={1}><path d="M17 9V2H3v16h7M6 6h8M6 9.500h6M6 13h3" /><circle cx="15" cy="15" r="3" stroke={B} /><circle cx="15" cy="15" r="1" fill={B} stroke={B} /></Svg></span>
    </div>
  );
}

function Grip() {
  return (
    <div className="flex w-[5px] shrink-0 items-center justify-center">
      <div className="h-[125px] w-[5px] bg-[#56626e]" />
    </div>
  );
}

const sheetRows: [string, string, string, string][] = [
  ["首层动力...", "1:1", "首层", "分层3"],
  ["二层动力...", "1:1", "第2层", "分层3"],
  ["三层动力...", "1:1", "第3层", "分层3"],
  ["四层动力...", "1:1", "第4层", "分层3"],
  ["五层动力...", "1:1", "第5层", "分层3"],
  ["六层动力...", "1:1", "第6层", "分层3"],
  ["七层动力...", "1:1", "第7层", "分层3"],
  ["八层动力...", "1:1", "第8层", "分层3"],
  ["九层动力...", "1:1", "第9层", "分层3"],
  ["十层动力...", "1:1", "第10层", "分层3"],
  ["十一层动...", "1:1", "第11层", "分层3"],
  ["十二层动...", "1:1", "第12层", "分层3"],
  ["十三层动...", "1:1", "第13层", "分层3"],
];

function MinusBox({ className = "" }: { className?: string }) {
  return <span className={"flex h-[15px] w-[15px] shrink-0 items-center justify-center rounded-[2px] border border-[#999] " + className}><span className="h-[1px] w-[7px] bg-[#555]" /></span>;
}

function Sheets() {
  return (
    <div className="flex h-[558px] shrink-0 flex-col">
      <PanelHead title="图纸管理" />
      <div className="mt-[1px] flex h-[32px] shrink-0 items-center gap-[9px] rounded-[4px] bg-white pl-[7px] text-[15px]">
        <TB icon={<Svg s={20}><path d="M2 9V3h4M14 3h4v6M2 14v3h6" /><path d="M11 3h1" /><path stroke={B} strokeWidth="1.600" d="M15 12v7M11.500 15.500h7" /><path stroke={B} d="M2 17v-3" /></Svg>} text="添加" />
        <TB icon={<Svg s={20} c="#c5c5c5"><path d="M2 9V3h4M14 3h4v6M2 14v4h5M18 14v4h-5" /><path d="M7 11h6M7 14h4" /></Svg>} text="定位" dim caret />
        <TB icon={<Svg s={20} c="#c5c5c5"><path d="M2 9V3h4M14 3h4v6M2 14v4h6" /><path d="M11 18l3-7 3 7M12 16h4" /></Svg>} text="手动分割" dim caret />
        <span className="ml-[3px]"><TB icon={<Svg s={20}><rect x="2" y="5" width="13" height="13" rx="2" /><path stroke={B} d="M7 2h9a2 2 0 0 1 2 2v9" /><path d="M8 9v5M5.500 11.500h5" /></Svg>} text="复制" /></span>
        <span className="ml-auto mr-[2px]"><More /></span>
      </div>
      <div className="mt-[2px] flex h-[31px] shrink-0 items-center justify-between bg-white pl-[3px] pr-[6px] text-[15px] text-[#b4b4b4]">
        <span>搜索图纸...</span>
        <Search size={14} color="#aaa" strokeWidth={1.500} />
      </div>
      <div className="relative mt-[2px] flex-1 overflow-hidden border border-[#dedede] bg-white text-[15px] text-[#4a4f55]">
        <div className="h-[428px] overflow-hidden">
          <div className="grid w-[375px] grid-cols-[28px_138px_64px_88px_57px]">
            <div className={cell} />
            <div className={cell + " justify-center bg-[#7ab7f5] text-white"}>图纸名称</div>
            <div className={cell + " justify-center"}>比例</div>
            <div className={cell + " justify-center"}>楼层</div>
            <div className={cell + " justify-center"}>分层</div>

            <div className={cell + " justify-center"}>1</div>
            <div className={cell + " pl-[3px] whitespace-nowrap"}><MinusBox className="mr-[8px]" />611平面动力...</div>
            <div className={cell} />
            <div className={cell} />
            <div className={cell} />

            <div className={cell + " justify-center"}>2</div>
            <div className={cell + " pl-[16px] whitespace-nowrap"}><MinusBox className="mr-[8px]" />模型</div>
            <div className={cell + " justify-center"}>1:1</div>
            <div className={cell + " justify-center"}>首层</div>
            <div className={cell + " justify-center"}>分层3</div>

            <div className={cell + " justify-center bg-[#7ab7f5] font-bold text-white"}>3</div>
            <div className={selCell + " bg-[#d4e8fc] pl-[50px] whitespace-nowrap"}>地下一层...</div>
            <div className={cell + " justify-center bg-[#d4e8fc]"}>1:1</div>
            <div className={cell + " justify-center bg-[#d4e8fc]"}>第-1层</div>
            <div className={cell + " justify-center bg-[#d4e8fc]"}>分层3</div>

            {sheetRows.map(([a, b, c, d], i) => (
              <React.Fragment key={a}>
                <div className={cell + " justify-center"}>{i + 4}</div>
                <div className={cell + " pl-[25px] whitespace-nowrap"}><span className="mr-[8px] h-[1px] w-[19px] bg-[#e0e0e0]" />{a}</div>
                <div className={cell + " justify-center"}>{b}</div>
                <div className={cell + " justify-center"}>{c}</div>
                <div className={cell + " justify-center"}>{d}</div>
              </React.Fragment>
            ))}
          </div>
        </div>
        <div className="absolute right-[5px] top-[18px] h-[73px] w-[10px] rounded-full bg-[#cdcdcd]" />
        <div className="flex h-[16px] items-center pl-[6px]">
          <span className="h-0 w-0 border-y-[5px] border-r-[6px] border-y-transparent border-r-[#555]" />
          <div className="ml-[4px] h-[9px] w-[254px] rounded-full bg-[#cdcdcd]" />
          <span className="ml-[92px] h-0 w-0 border-y-[5px] border-l-[6px] border-y-transparent border-l-[#555]" />
        </div>
      </div>
    </div>
  );
}

function Layers() {
  const c2 = "flex items-center border-b-2 border-r-2 border-[#ebebeb]";
  const blueBox = <span className="flex h-[18px] w-[18px] items-center justify-center rounded-[2px] border-2 border-[#b0b0b0] bg-[#8fc4ff]" />;
  const tri = <span className="h-0 w-0 border-y-[5px] border-l-[9px] border-y-transparent border-l-[#555]" />;
  return (
    <div className="mt-[7px] flex flex-1 flex-col">
      <PanelHead title="CAD图层" />
      <div className="mt-[1px] flex h-[32px] shrink-0 items-center gap-[10px] rounded-[4px] bg-white pl-[7px] text-[15px]">
        <TB text="选择相同颜色" caret />
        <TB text="显示CAD图层" caret />
        <TB text="显示CAD图元" caret />
      </div>
      <div className="mt-[8px] flex-1 border border-[#dedede] bg-white text-[15px] text-[#4a4f55]">
        <div className="grid w-[296px] grid-cols-[63px_45px_188px]">
          <div className={c2 + " h-[26px] justify-center"}>开/关</div>
          <div className={c2 + " h-[26px] justify-center"}>颜色</div>
          <div className={c2 + " h-[26px] justify-center"}>名称</div>
          <div className={c2 + " h-[32px] justify-center pt-[4px]"}>{blueBox}</div>
          <div className={c2 + " h-[32px] justify-center"}>{tri}</div>
          <div className={c2 + " h-[32px] pl-[4px]"}>已提取的CAD图层</div>
          <div className={c2 + " h-[32px] justify-center pt-[4px]"}>{blueBox}</div>
          <div className={c2 + " h-[32px] justify-center"}>{tri}</div>
          <div className={c2 + " h-[32px] pl-[4px]"}>CAD原始图层</div>
        </div>
      </div>
    </div>
  );
}

function Btn({ w, active, caret, children }: { w: string; active?: boolean; caret?: boolean; children: React.ReactNode }) {
  return (
    <div className={"flex h-[31px] shrink-0 items-center justify-center gap-[3px] rounded-[4px] border " + w + (active ? " border-[#7ab0ee] bg-[#d6e7fb]" : " border-[#c8c8c8] bg-white")}>
      {children}
      {caret && <span className="h-0 w-0 border-x-[3px] border-t-[4px] border-x-transparent border-t-[#555]" />}
    </div>
  );
}

function Status() {
  return (
    <div className="flex h-[39px] shrink-0 items-center bg-[#fbfbfb] text-[14px] text-[#555]">
      <span className="ml-[3px] w-[328px] shrink-0 text-[15px] tracking-[0.55px]">X = -36028.02 Y = 720.85</span>
      <span className="w-[141px] shrink-0">层高：5.1</span>
      <span className="w-[168px] shrink-0">底标高：-5.1</span>
      <span className="w-[128px] shrink-0">0</span>
      <span className="w-[129px] shrink-0">隐藏：0</span>
      <div className="flex items-center gap-[4px]">
        <Btn w="w-[30px]"><Svg s={18} sw={1.100}><path d="M4 2v14h13M4 11h5v5" /></Svg></Btn>
        <Btn w="w-[45px]" active caret><Svg s={18} sw={1.100}><rect x="3" y="3" width="13" height="14" rx="2" /><circle cx="3.500" cy="3.500" r="1.500" stroke={B} fill="#fff" /></Svg></Btn>
        <Btn w="w-[44px]" caret><Svg s={20} sw={1.100}><path d="M10 2l7 4v8l-7 4-7-4V6zM3 6l7 4 7-4M10 10v8" /></Svg></Btn>
        <Btn w="w-[30px]"><Svg s={20} sw={1.100} c="#999"><path d="M4 2l12 16M16 2L4 18" /></Svg></Btn>
        <Btn w="w-[45px]" caret><Svg s={20} sw={1.100}><path d="M14 3L4 16h13M8 10c2 1 3 3 3 6" /></Svg></Btn>
        <Btn w="w-[44px]" caret><Svg s={20} sw={1.100}><path d="M2 7h6M5 4v6" /><rect x="7" y="12" width="11" height="4" fill="#444" /></Svg></Btn>
        <Btn w="w-[30px]" active><Svg s={20} sw={1.300}><rect x="3" y="3" width="11" height="13" rx="1" fill="#2e6ce0" stroke="#234" /><path stroke={B} d="M14 8h3v9h-4" /></Svg></Btn>
        <Btn w="w-[31px]"><Svg s={20} sw={1.100}><path d="M4 18c0-8 3-14 12-15" /><path d="M10 9l5 5-5 1z" fill="#444" /><circle cx="16" cy="3" r="1" /></Svg></Btn>
      </div>
      <span className="ml-[8px] w-[142px] shrink-0 whitespace-nowrap text-[15px]">CAD图亮度：60%</span>
      <Btn w="w-[30px]"><span className="flex h-[15px] w-[15px] items-center justify-center rounded-full border border-[#2e86ea]"><span className="h-[1px] w-[7px] bg-[#2e86ea]" /></span></Btn>
      <div className="relative flex h-[31px] w-[58px] shrink-0 items-center">
        <div className="h-[3px] w-full bg-[#d0d0d0]" />
        <div className="absolute left-[28px] top-0 h-[31px] w-[11px] rounded-[3px] border border-[#888] bg-white" />
      </div>
      <Btn w="w-[31px]"><span className="flex h-[15px] w-[15px] items-center justify-center rounded-full border border-[#2e86ea]"><Plus size={10} color="#2e86ea" /></span></Btn>
      <span className="ml-[2px] whitespace-nowrap text-[15px]">按鼠标左键指定第一个角点，或拾取构件图元</span>
    </div>
  );
}

function Task({ active, bar, children }: { active?: boolean; bar?: boolean; children: React.ReactNode }) {
  return (
    <div className={"relative flex h-[50px] w-[61.500px] shrink-0 items-center justify-center " + (active ? "bg-[#e3ecf2]" : "")}>
      {children}
      {bar && <div className="absolute bottom-0 left-[5px] right-[5px] h-[3px] bg-[#0b78d7]" />}
      {active && <div className="absolute bottom-0 left-0 right-0 h-[3px] bg-[#0b78d7]" />}
    </div>
  );
}

function Taskbar() {
  return (
    <div className="flex h-[50px] shrink-0 items-center bg-gradient-to-r from-[#cddfea] to-[#d9e3e7] text-black">
      <div className="flex w-[61px] shrink-0 justify-center">
        <svg width="22" height="22" viewBox="0 0 22 22" fill="#000"><path d="M0 3l9-1.500v9H0zM10 1.300L22 0v10.500H10zM0 11.500h9v9L0 19zM10 11.500h12V22l-12-1.700z" /></svg>
      </div>
      <div className="flex h-[48px] w-[429px] shrink-0 items-center bg-white pl-[14px] text-[18.500px] text-[#222]">
        <Svg s={24} c="#222" sw={1}><circle cx="12" cy="8" r="6" /><path d="M8 13L3 19" /></Svg>
        <span className="ml-[10px]">在这里输入你要搜索的内容</span>
      </div>
      <div className="flex w-[60px] shrink-0 justify-center"><span className="h-[18px] w-[18px] rounded-full border-[3px] border-black" /></div>
      <div className="flex w-[62px] shrink-0 justify-center"><Svg s={24} c="#222" sw={1}><path d="M5 7h10V2M5 2v1M5 18h10v-6H5zM18 7v1M18 12v1M5 22h10" /></Svg></div>
      <div className="ml-[2px] flex">
        <Task>
          <svg width="30" height="30" viewBox="0 0 30 36" preserveAspectRatio="none"><rect width="30" height="36" rx="5" fill="#3e8bf2" /><path d="M6 7l8 7 9-7-4 11 5 3-8 1-3 8-2-9-6-2 5-2z" fill="#fff" /></svg>
        </Task>
        <Task bar>
          <svg width="32" height="30" viewBox="0 0 32 34" preserveAspectRatio="none"><defs><linearGradient id="ed" x1="0" y1="0" x2="1" y2="1"><stop offset="0" stopColor="#2fc39b" /><stop offset="0.5" stopColor="#1b9de2" /><stop offset="1" stopColor="#0c5a9e" /></linearGradient></defs><path d="M16 1C8 1 1 8 1 17s7 16 15 16c5 0 9-2 12-5-6 3-14 1-15-6-1-5 3-8 8-8 4 0 7 2 10 4 1-10-6-17-15-17z" fill="url(#ed)" /><path d="M22 22c4 0 8-1 9-4 0 5-4 9-8 9z" fill="#7fdc5a" /></svg>
        </Task>
        <Task bar>
          <svg width="30" height="30" viewBox="0 0 30 36" preserveAspectRatio="none"><path d="M2 6h9l3 3h14v24H2z" fill="#f7d56a" /><path d="M2 2h11v5H2z" fill="#e4a829" /><rect x="8" y="18" width="14" height="15" fill="#2a8fd9" /><rect x="12" y="25" width="6" height="8" fill="#155f96" /></svg>
        </Task>
        <Task>
          <svg width="30" height="30" viewBox="0 0 32 36" preserveAspectRatio="none"><ellipse cx="16" cy="18" rx="14" ry="17" fill="#2bb4f2" /><path d="M10 12h12l-10 12h12" fill="none" stroke="#fff" strokeWidth="3.500" strokeLinecap="round" strokeLinejoin="round" /></svg>
        </Task>
        <Task>
          <svg width="32" height="30" viewBox="0 0 32 34" preserveAspectRatio="none"><path d="M16 1L1 12v21h30V12z" fill="#0f67b8" /><path d="M4 10h24v16L16 18 4 26z" fill="#eaf4fb" /><path d="M1 12l15 11 15-11v21H1z" fill="#35b8ef" /><path d="M16 23l15 10H1z" fill="#7dd8f8" /></svg>
        </Task>
        <Task bar>
          <div className="flex h-[30px] w-[30px] items-center justify-center rounded-[3px] bg-[#28639f] text-[12px] font-bold text-[#cfe6f8]">CAD</div>
        </Task>
        <Task bar>
          <div className="relative flex h-[32px] w-[34px] items-start justify-center text-[26px] font-bold italic leading-[30px] text-[#e23a30]">V
            <span className="absolute bottom-[1px] right-0 flex h-[15px] w-[10px] items-center justify-center rounded-[2px] bg-[#5fc868] text-[10px] not-italic text-white">S</span>
          </div>
        </Task>
        <Task active>
          <div className="flex h-[32px] w-[30px] items-center justify-center rounded-[6px] bg-[#dbe2f4]"><svg width="22" height="24" viewBox="0 0 44 46"><path d="M5 38L23 6l7 22" fill="none" stroke="#5a5ac8" strokeWidth="8" strokeLinecap="round" strokeLinejoin="round" /><path d="M11 33c8-8 17-8 21-3l7 8" fill="none" stroke="#5a5ac8" strokeWidth="7" strokeLinecap="round" /></svg></div>
        </Task>
      </div>
      <div className="ml-[294px] flex items-center text-[18px] text-[#222]">
        <span className="h-[24px] w-[24px] rounded-full bg-gradient-to-b from-[#ffe27a] to-[#f6a81e]" />
        <span className="ml-[13px]">28°C</span>
        <span className="ml-[14px]">晴朗</span>
        <svg width="16" height="10" viewBox="0 0 16 10" fill="none" stroke="#222" className="ml-[18px]"><path d="M1 9l7-8 7 8" /></svg>
        <span className="relative ml-[10px]"><Svg s={22} c="#222" sw={1}><path d="M4 3h12v14H4zM8 7a3 3 0 1 1-1 4" /></Svg><span className="absolute bottom-[-1px] right-[2px] h-[9px] w-[9px] rounded-full bg-[#f39019]" /></span>
        <span className="ml-[10px] flex"><Svg s={20} c="#222" sw={1.100}><rect x="2" y="6" width="14" height="10" fill="#111" /><path d="M17 9v4M6 2v4M12 2v4" /></Svg></span>
        <span className="ml-[11px] flex"><Svg s={20} c="#555" sw={1.100}><path d="M2 18a16 16 0 0 1 16-16M6 18A12 12 0 0 1 18 6M10 18a8 8 0 0 1 8-8" /></Svg></span>
        <span className="ml-[6px] flex"><Svg s={20} c="#444" sw={1.100}><path d="M2 7h4l5-4v14l-5-4H2zM14 7c1 2 1 4 0 6M17 5c2 3 2 7 0 10" /></Svg></span>
        <span className="ml-[13px] text-[20px] leading-none">中</span>
        <span className="ml-[16px] flex h-[24px] w-[20px] items-center justify-center rounded-[5px] bg-[#ef5a1f] text-[16px] font-bold leading-none text-white">S</span>
        <div className="ml-[21px] flex w-[82px] flex-col items-center text-[16px] leading-[25px]">
          <span>16:51</span>
          <span>2022/5/16</span>
        </div>
        <span className="relative ml-[18px] flex h-[24px] w-[20px] flex-col justify-center gap-[3px] bg-black px-[3px]">
          <span className="h-[1.500px] bg-white" /><span className="h-[1.500px] bg-white" /><span className="h-[1.500px] bg-white" />
          <span className="absolute -right-[9px] bottom-[-8px] flex h-[18px] w-[18px] items-center justify-center rounded-full border border-[#555] bg-[#d9e3e7] text-[13px]">1</span>
        </span>
      </div>
    </div>
  );
}

export default function App() {
  return (
    <div className="flex h-[1080px] w-[1920px] flex-col overflow-hidden bg-white font-['Noto_Sans','Noto_Sans_CJK_SC',sans-serif] blur-[0.35px]">
      <Header />
      <Ribbon />
      <SelBar />
      <div className="flex h-[781px] shrink-0 bg-[#f4f4f4]">
        <Nav />
        <div className="ml-[5px] flex w-[355px] shrink-0 flex-col">
          <ComponentList />
          <Props />
        </div>
        <Grip />
        <div className="relative w-[937px] shrink-0 bg-black">
          <CanvasDrawing />
          <CanvasTools />
        </div>
        <Grip />
        <div className="flex w-[397px] shrink-0 flex-col">
          <Sheets />
          <Layers />
        </div>
      </div>
      <Status />
      <Taskbar />
    </div>
  );
}
